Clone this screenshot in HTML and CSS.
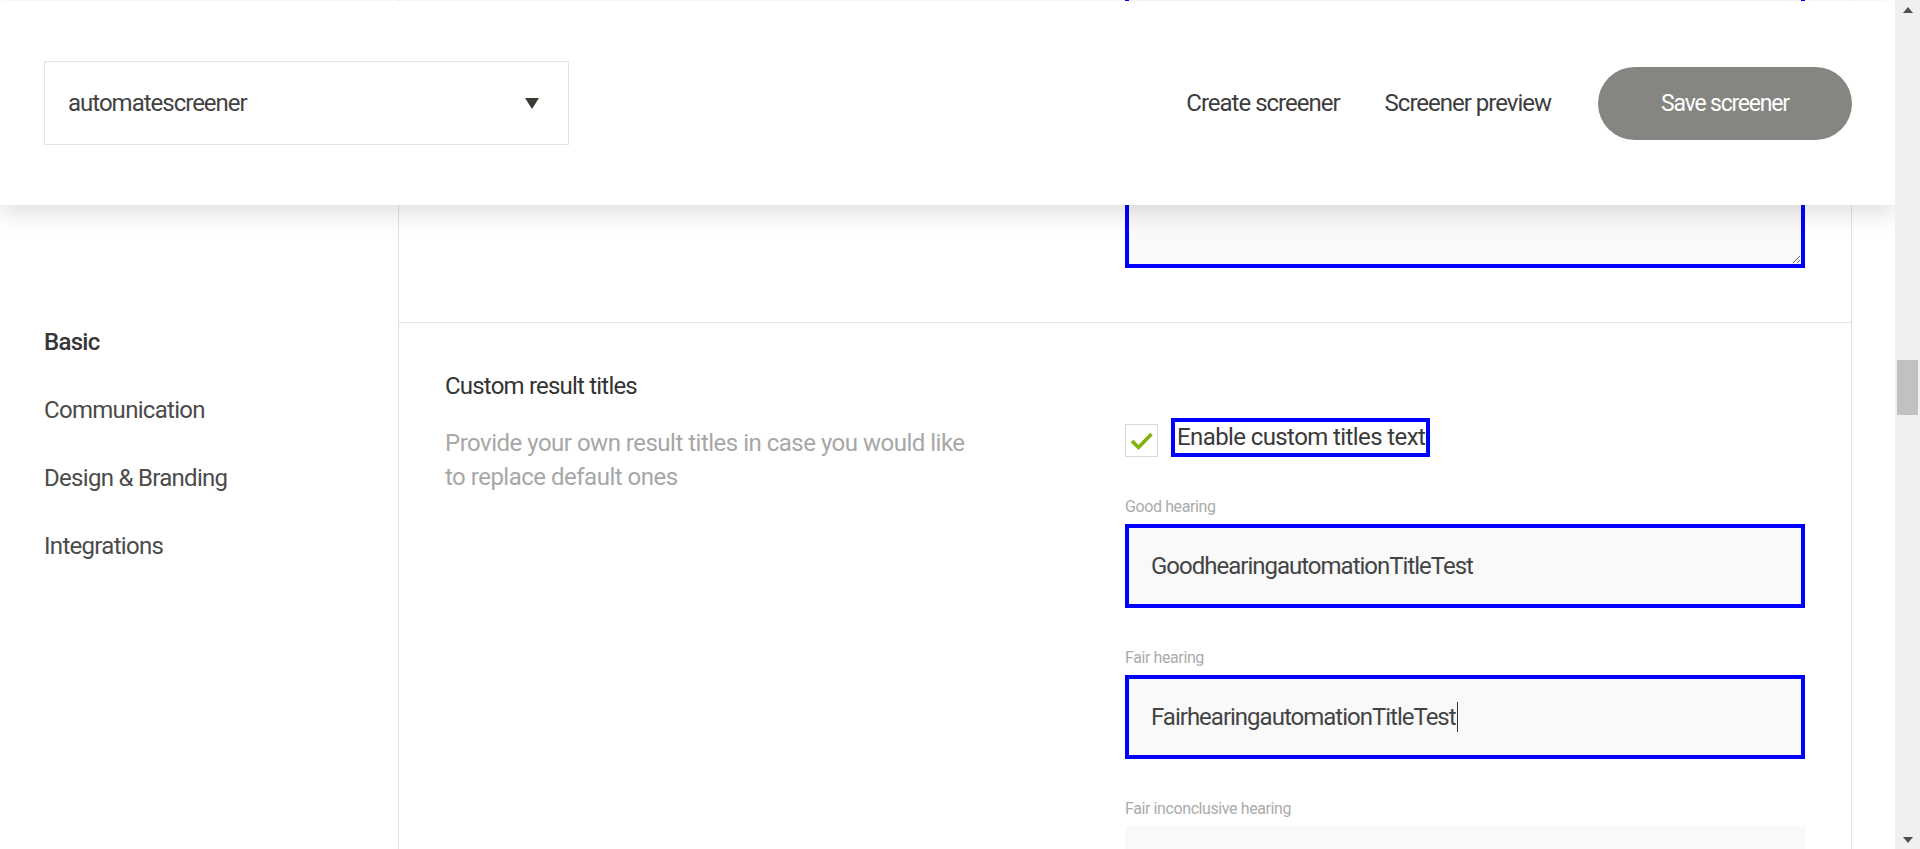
FILE: index.html
```html
<!DOCTYPE html>
<html lang="en">
<head>
<meta charset="utf-8">
<title>Screener settings</title>
<link rel="stylesheet" href="styles.css">
</head>
<body>
<div class="app">
  <div class="viewport">
    <header class="topbar">
      <div class="select">
        <span class="select-value">automatescreener</span>
        <span class="select-arrow"></span>
      </div>
      <nav class="topnav">
        <a class="topnav-link">Create screener</a>
        <a class="topnav-link">Screener preview</a>
        <button class="btn-save" type="button">Save screener</button>
      </nav>
    </header>

    <div class="layout">
      <aside class="sidebar">
        <ul class="side-nav">
          <li class="side-item is-active">Basic</li>
          <li class="side-item">Communication</li>
          <li class="side-item">Design &amp; Branding</li>
          <li class="side-item">Integrations</li>
        </ul>
      </aside>

      <main class="content">
        <section class="section section-top">
          <div class="section-info"></div>
          <div class="section-form">
            <textarea class="textarea"></textarea>
          </div>
        </section>

        <section class="section">
          <div class="section-info">
            <h2 class="section-title">Custom result titles</h2>
            <p class="section-desc">Provide your own result titles in case you would like to replace default ones</p>
          </div>
          <div class="section-form form-offset">
            <div class="check-row">
              <span class="checkbox">
                <svg width="24" height="20" viewBox="0 0 24 20"><polyline points="2,10 8.5,16.5 21.5,3" fill="none" stroke="#82b20c" stroke-width="3.6"/></svg>
              </span>
              <label class="check-label">Enable custom titles text</label>
            </div>

            <div class="field">
              <div class="field-label">Good hearing</div>
              <div class="field-input">GoodhearingautomationTitleTest</div>
            </div>

            <div class="field">
              <div class="field-label">Fair hearing</div>
              <div class="field-input">FairhearingautomationTitleTest<span class="caret"></span></div>
            </div>

            <div class="field">
              <div class="field-label">Fair inconclusive hearing</div>
              <div class="field-input field-input-plain"></div>
            </div>
          </div>
        </section>
      </main>

      <div class="gutter"></div>
    </div>
  </div>

  <div class="scrollbar">
    <span class="sb-arrow sb-up"></span>
    <span class="sb-thumb"></span>
    <span class="sb-arrow sb-down"></span>
  </div>
</div>
</body>
</html>
```

FILE: styles.css
```css
html, body {
  margin: 0;
  padding: 0;
  height: 849px;
  overflow: hidden;
  background: #fff;
}

body {
  font-family: Roboto, "Liberation Sans", sans-serif;
  font-size: 24px;
  letter-spacing: -1px;
  color: #3d3d3d;
}

.app {
  display: flex;
  height: 849px;
  overflow: hidden;
}

.viewport {
  position: relative;
  flex: 1 1 auto;
  overflow: hidden;
}

/* ---------- Top bar (fixed over scrolled content) ---------- */
.topbar {
  position: absolute;
  top: 1px;
  left: 0;
  right: 0;
  z-index: 5;
  height: 204px;
  box-sizing: border-box;
  padding: 0 43px 0 44px;
  display: flex;
  align-items: center;
  justify-content: space-between;
  background: #fff;
  box-shadow: 0 8px 22px rgba(0, 0, 0, 0.13);
}

.select {
  width: 525px;
  height: 84px;
  box-sizing: border-box;
  border: 1px solid #e3e3e3;
  padding: 0 29px 0 23px;
  display: flex;
  align-items: center;
  justify-content: space-between;
  color: #424242;
}

.select-arrow {
  width: 0;
  height: 0;
  border-left: 7.5px solid transparent;
  border-right: 7.5px solid transparent;
  border-top: 11px solid #3b3b36;
}

.topnav {
  display: flex;
  align-items: center;
  gap: 45px;
}

.topnav-link {
  color: #3d3d3d;
  cursor: pointer;
}

.btn-save {
  width: 254px;
  height: 73px;
  margin-left: 2px;
  border: none;
  border-radius: 37px;
  background: #858581;
  color: #fff;
  font-family: inherit;
  font-size: 23px;
  letter-spacing: -1.2px;
  cursor: pointer;
}

/* ---------- Layout ---------- */
.layout {
  display: flex;
  height: 100%;
}

.sidebar {
  flex: 0 0 399px;
  box-sizing: border-box;
  border-right: 1px solid #e1e1e1;
  padding-top: 327px;
}

.side-nav {
  list-style: none;
  margin: 0;
  padding: 0 0 0 44px;
  display: flex;
  flex-direction: column;
  gap: 38px;
}

.side-item {
  line-height: 30px;
  letter-spacing: -0.7px;
  color: #4b4b4b;
}

.side-item.is-active {
  font-weight: 500;
  color: #363636;
}

.content {
  flex: 0 0 1453px;
  box-sizing: border-box;
  border-right: 1px solid #e1e1e1;
}

.gutter {
  flex: 1 1 auto;
}

/* ---------- Sections ---------- */
.section {
  display: grid;
  grid-template-columns: 1fr 680px;
  padding: 48px 46px 0;
}

.section-top {
  margin-top: -40px;
  padding-top: 0;
  padding-bottom: 54px;
  border-bottom: 1px solid #e5e5e5;
}

.textarea {
  display: block;
  width: 100%;
  height: 308px;
  box-sizing: border-box;
  border: 4px solid #0000ff;
  background: #f9f9f9;
  resize: vertical;
  font: inherit;
}

.section-title {
  margin: 0 0 25px;
  font-size: 24px;
  font-weight: 400;
  line-height: 30px;
  letter-spacing: -0.8px;
  color: #343434;
}

.section-desc {
  margin: 0;
  max-width: 530px;
  line-height: 34px;
  letter-spacing: -0.5px;
  color: #a7a7a7;
}

.form-offset {
  padding-top: 47px;
}

.check-row {
  display: flex;
  align-items: flex-end;
  gap: 13px;
}

.checkbox {
  width: 33px;
  height: 33px;
  box-sizing: border-box;
  border: 1px solid #d9d9d9;
  background: #fff;
  display: flex;
  align-items: center;
  justify-content: center;
}

.check-label {
  border: 4px solid #0000ff;
  padding: 0 1px 0 2px;
  line-height: 31px;
  letter-spacing: -0.6px;
  color: #3a3a3a;
}

.field {
  margin-top: 40px;
}

.field-label {
  font-size: 16px;
  line-height: 20px;
  letter-spacing: -0.4px;
  color: #ababab;
  margin-bottom: 7px;
}

.field-input {
  height: 84px;
  box-sizing: border-box;
  border: 4px solid #0000ff;
  background: #f9f9f9;
  padding: 0 22px;
  display: flex;
  align-items: center;
  color: #444;
}

.field-input-plain {
  border-color: #f9f9f9;
}

.caret {
  display: inline-block;
  width: 1px;
  height: 30px;
  margin-left: 1px;
  background: #333;
}

/* ---------- Scrollbar ---------- */
.scrollbar {
  flex: 0 0 25px;
  background: #f0f0f0;
  display: flex;
  flex-direction: column;
  align-items: center;
}

.sb-arrow {
  width: 0;
  height: 0;
  border-left: 5.5px solid transparent;
  border-right: 5.5px solid transparent;
}

.sb-up {
  margin-top: 7px;
  border-bottom: 6px solid #505050;
}

.sb-thumb {
  width: 21px;
  height: 55px;
  margin-top: 347px;
  background: #c1c1c1;
}

.sb-down {
  margin-top: auto;
  margin-bottom: 6px;
  border-top: 6px solid #505050;
}
```
